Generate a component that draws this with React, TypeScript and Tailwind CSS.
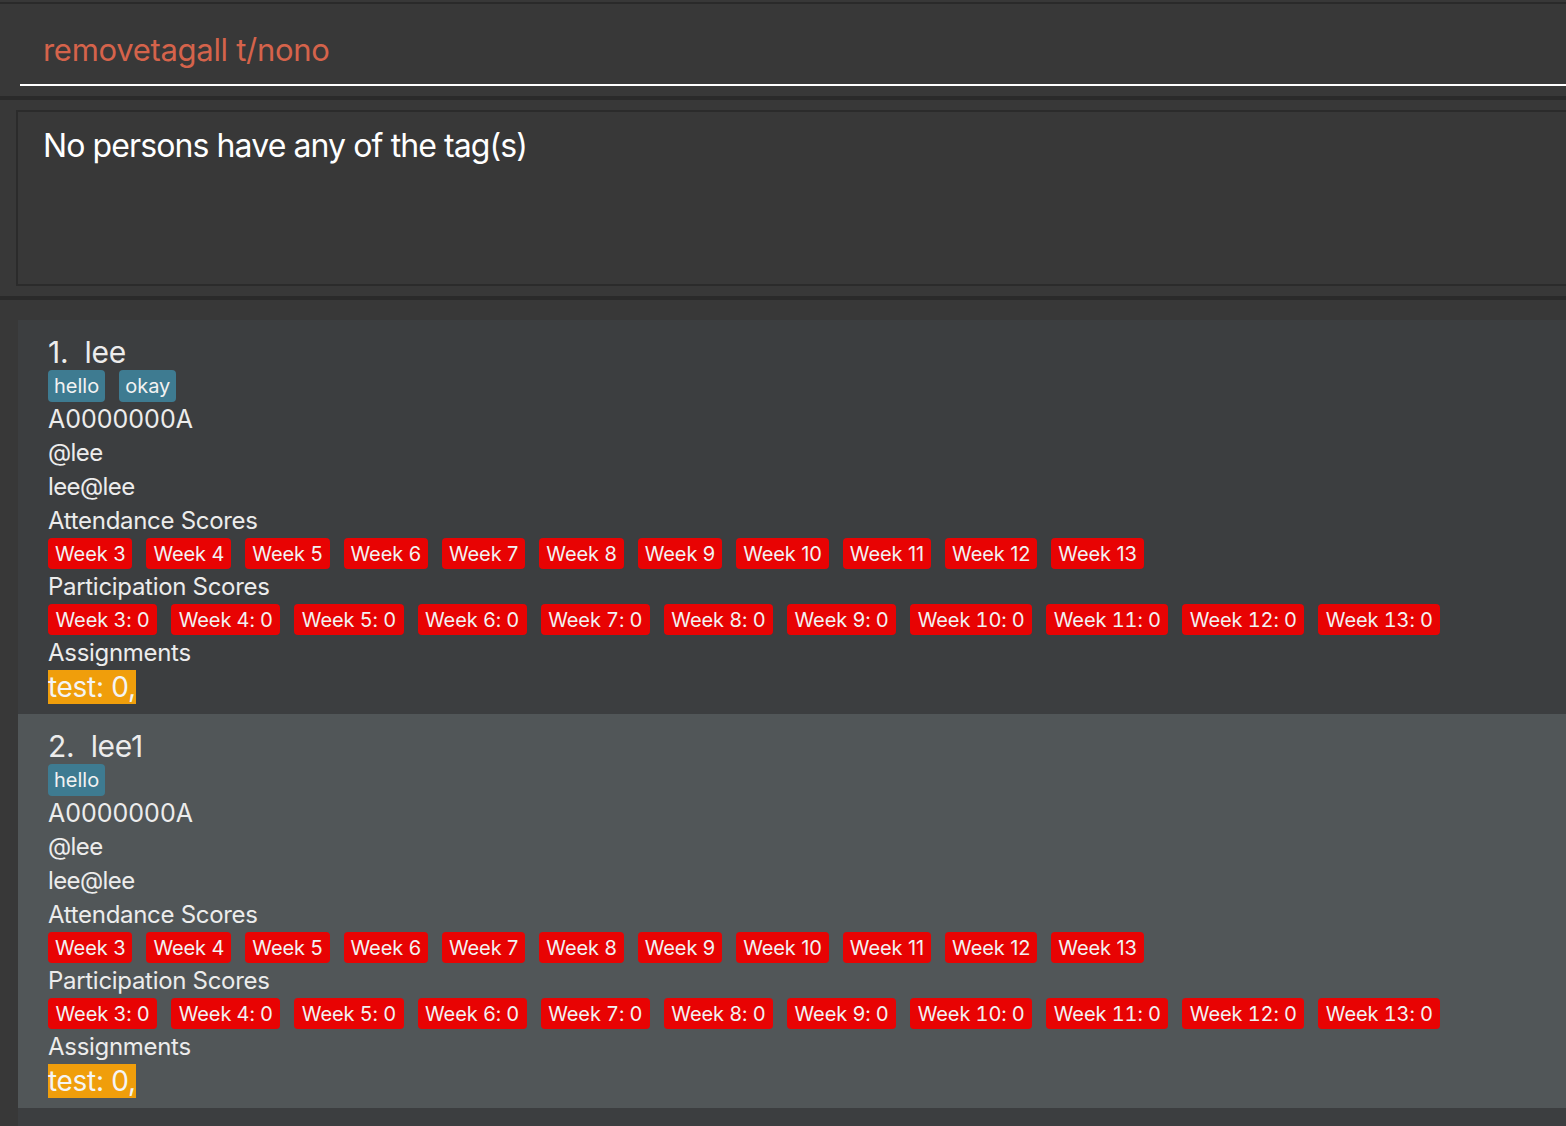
import React from "react";

const weeks = [3, 4, 5, 6, 7, 8, 9, 10, 11, 12, 13];

function Card({ idx, name, tags, bg }: { idx: number; name: string; tags: string[]; bg: string }) {
  return (
    <div className={`${bg} pl-[30px] pt-[14px] pb-[10px] text-[#ececec]`}>
      <div className="h-[36px] text-[30px] leading-[36px] tracking-[-0.3px]">
        {idx}.&nbsp;&nbsp;{name}
      </div>
      <div className="flex h-[32px] gap-[14px]">
        {tags.map((t) => (
          <span key={t} className="inline-flex h-[32px] items-center rounded-[4px] bg-[#3e7b91] px-[6px] text-[20px] leading-none text-[#f2f2f2]">
            {t}
          </span>
        ))}
      </div>
      <div className="h-[34px] text-[25px] leading-[34px]">A0000000A</div>
      <div className="h-[34px] text-[24px] leading-[34px] tracking-[-0.6px]">@lee</div>
      <div className="h-[34px] text-[24px] leading-[34px] tracking-[-0.6px]">lee@lee</div>
      <div className="h-[34px] text-[24px] leading-[34px] tracking-[-0.3px]">Attendance Scores</div>
      <div className="flex h-[32px] gap-[14px]">
        {weeks.map((w) => (
          <span key={w} className="inline-flex h-[31px] items-center rounded-[4px] bg-[#e80303] px-[7px] text-[20px] leading-none text-[#f2f2f2] tracking-[-0.1px]">
            Week {w}
          </span>
        ))}
      </div>
      <div className="h-[34px] text-[24px] leading-[34px] tracking-[-0.3px]">Participation Scores</div>
      <div className="flex h-[32px] gap-[14px]">
        {weeks.map((w) => (
          <span key={w} className="inline-flex h-[31px] items-center rounded-[4px] bg-[#e80303] px-[7.5px] text-[20px] leading-none text-[#f2f2f2] tabular-nums tracking-[-0.1px]">
            Week {w}:&nbsp;0
          </span>
        ))}
      </div>
      <div className="h-[34px] text-[24px] leading-[34px] tracking-[-0.3px]">Assignments</div>
      <div className="flex h-[34px]">
        <span className="inline-flex h-[34px] items-center bg-[#f09e0b] text-[28px] leading-none text-[#f4f4f4] tracking-[-0.3px]">
          test: 0,
        </span>
      </div>
    </div>
  );
}

export default function App() {
  return (
    <div className="h-[1126px] w-[1566px] overflow-hidden bg-[#383838]" style={{ fontFamily: "Inter, 'Noto Sans', sans-serif" }}>
      <div className="h-[2px]" />
      <div className="h-[2px] bg-[#2a2a2a]" />
      {/* command box */}
      <div className="h-[92px] pl-[20px]">
        <div className="flex h-[82px] items-center border-b-2 border-white pl-[23px] pt-[10px]">
          <span className="text-[31px] leading-none tracking-[-0.3px] text-[#d5634b]">removetagall t/nono</span>
        </div>
      </div>
      <div className="h-[4px] bg-[#2a2a2a]" />
      {/* result display */}
      <div className="h-[196px] pl-[16px] pt-[10px]">
        <div className="h-[176px] border-2 border-r-0 border-[#2b2b2b] pl-[25px] pt-[12px]">
          <div className="text-[32px] leading-[44px] tracking-[-0.9px] text-white">No persons have any of the tag(s)</div>
        </div>
      </div>
      <div className="h-[4px] bg-[#2a2a2a]" />
      {/* list */}
      <div className="pl-[18px] pt-[20px]">
        <Card idx={1} name="lee" tags={["hello", "okay"]} bg="bg-[#3c3e40]" />
        <Card idx={2} name="lee1" tags={["hello"]} bg="bg-[#515658]" />
        <div className="h-[40px] bg-[#3c3e40]" />
      </div>
    </div>
  );
}
